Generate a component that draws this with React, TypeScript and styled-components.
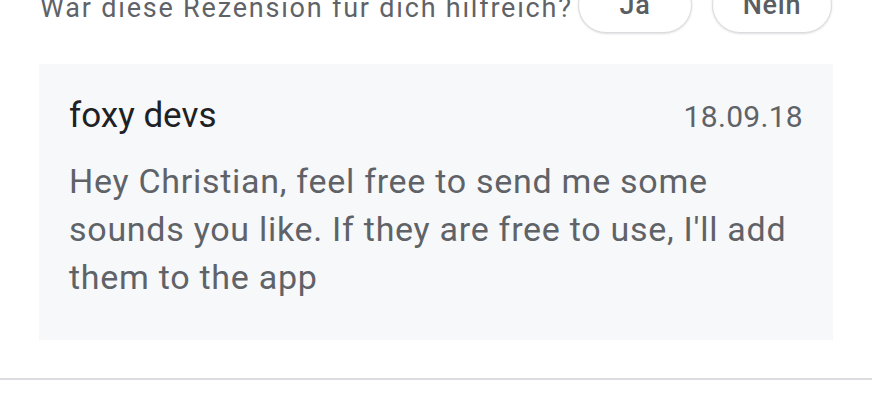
import React from "react";
import styled, { createGlobalStyle } from "styled-components";

const GlobalStyle = createGlobalStyle`
  html, body {
    margin: 0;
    padding: 0;
    background: #ffffff;
    font-family: Roboto, "Liberation Sans", sans-serif;
    overflow: hidden;
  }
`;

const Page = styled.div`
  width: 872px;
  height: 402px;
  display: flex;
  flex-direction: column;
`;

const FeedbackRow = styled.div`
  display: flex;
  align-items: flex-start;
  height: 56px;
  margin-top: -23px;
  padding: 0 40px;
`;

const Question = styled.span`
  margin-top: 15px;
  font-size: 27px;
  line-height: 32px;
  color: #5f6368;
  letter-spacing: 1.8px;
  white-space: nowrap;
`;

const VoteButton = styled.button<{ $width: number; $first?: boolean }>`
  width: ${({ $width }) => $width}px;
  height: 56px;
  margin-left: ${({ $first }) => ($first ? "auto" : "20px")};
  border: 1px solid #dadce0;
  border-radius: 28px;
  background: #ffffff;
  box-shadow: 0 1px 2px rgba(60, 64, 67, 0.18);
  font-family: Roboto, "Liberation Sans", sans-serif;
  font-size: 27px;
  font-weight: 500;
  letter-spacing: 0.8px;
  color: #5a5e63;
  padding: 0;
`;

const Card = styled.div`
  margin: 31px 39px 0 39px;
  height: 276px;
  box-sizing: border-box;
  background: #f7f8fa;
  padding: 34px 30px 0 30px;
`;

const CardHeader = styled.div`
  display: flex;
  justify-content: space-between;
  align-items: baseline;
  height: 36px;
  line-height: 36px;
`;

const Author = styled.span`
  font-size: 35px;
  color: #202124;
`;

const DateLabel = styled.span`
  font-size: 30px;
  color: #5f6368;
  letter-spacing: 0.3px;
`;

const Reply = styled.p`
  margin: 23px 0 0 0;
  font-size: 34px;
  line-height: 48px;
  letter-spacing: 0.72px;
  color: #5f6368;
  white-space: nowrap;
`;

const Divider = styled.div`
  margin-top: 38px;
  height: 2px;
  background: #dadce0;
`;

export default function App() {
  return (
    <Page>
      <GlobalStyle />
      <FeedbackRow>
        <Question>War diese Rezension für dich hilfreich?</Question>
        <VoteButton $width={114} $first>
          Ja
        </VoteButton>
        <VoteButton $width={120}>Nein</VoteButton>
      </FeedbackRow>
      <Card>
        <CardHeader>
          <Author>foxy devs</Author>
          <DateLabel>18.09.18</DateLabel>
        </CardHeader>
        <Reply>
          Hey Christian, feel free to send me some
          <br />
          sounds you like. If they are free to use, I'll add
          <br />
          them to the app
        </Reply>
      </Card>
      <Divider />
    </Page>
  );
}
